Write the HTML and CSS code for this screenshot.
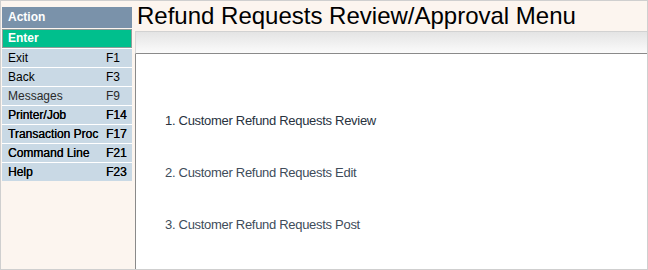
FILE: index.html
```html
<!DOCTYPE html>
<html>
<head>
<meta charset="utf-8">
<link rel="stylesheet" href="styles.css">
</head>
<body>
<div class="frame">
  <aside class="sidebar">
    <div class="side-head">Action</div>
    <div class="side-enter">Enter</div>
    <ul class="keys">
      <li class="key"><span>Exit</span><span>F1</span></li>
      <li class="key"><span>Back</span><span>F3</span></li>
      <li class="key dim"><span>Messages</span><span>F9</span></li>
      <li class="key strong"><span>Printer/Job</span><span>F14</span></li>
      <li class="key strong"><span>Transaction Proc</span><span>F17</span></li>
      <li class="key strong"><span>Command Line</span><span>F21</span></li>
      <li class="key strong"><span>Help</span><span>F23</span></li>
    </ul>
  </aside>
  <main class="main">
    <h1 class="title">Refund Requests Review/Approval Menu</h1>
    <div class="toolbar"></div>
    <div class="panel">
      <ol class="menu">
        <li class="item current">1. Customer Refund Requests Review</li>
        <li class="item">2. Customer Refund Requests Edit</li>
        <li class="item">3. Customer Refund Requests Post</li>
      </ol>
    </div>
  </main>
</div>
</body>
</html>
```
FILE: styles.css
```css
html, body {
  margin: 0;
  padding: 0;
}
body {
  width: 648px;
  height: 270px;
  overflow: hidden;
  font-family: "Liberation Sans", Arial, sans-serif;
}
.frame {
  box-sizing: border-box;
  width: 648px;
  height: 270px;
  border: 1px solid #cfcfcf;
  background: #fcf5ef;
  display: flex;
}
.sidebar {
  width: 130px;
  margin-left: 1px;
  padding-top: 6px;
  flex: none;
}
.side-head {
  height: 21px;
  line-height: 21px;
  background: #7a92aa;
  color: #fff;
  font-weight: bold;
  font-size: 12px;
  padding-left: 6px;
}
.side-enter {
  margin-top: 1px;
  height: 17px;
  line-height: 17px;
  border: 1px solid #8e9c9a;
  background: #00bf8d;
  color: #fff;
  font-weight: bold;
  font-size: 12px;
  padding-left: 5px;
}
.keys {
  list-style: none;
  margin: 0;
  padding: 0;
}
.key {
  display: grid;
  grid-template-columns: 98px auto;
  height: 18px;
  line-height: 18px;
  border-top: 1px solid #ffffff;
  background: #c9d9e5;
  color: #000;
  font-size: 12px;
  padding-left: 6px;
}
.key.dim {
  color: #2a2a2a;
}
.key.strong {
  color: #000;
  text-shadow: 0.2px 0 0 #000;
}
.main {
  flex: 1;
  display: flex;
  flex-direction: column;
  margin-left: 3px;
}
.title {
  margin: 0;
  height: 30px;
  padding-left: 2px;
  font-weight: normal;
  font-size: 24px;
  line-height: 30px;
  color: #000;
}
.toolbar {
  height: 21px;
  border-top: 1px solid #d2d2d2;
  border-bottom: 1px solid #8a8a8a;
  border-left: 1px solid #d8d8d8;
  background: linear-gradient(to bottom, #e4e4e4, #fbfbfb);
}
.panel {
  flex: 1;
  background: #fff;
  border-left: 1px solid #8a8a8a;
}
.menu {
  list-style: none;
  margin: 0;
  padding: 59px 0 0 29px;
  display: flex;
  flex-direction: column;
  gap: 36px;
}
.item {
  font-size: 13px;
  line-height: 16px;
  letter-spacing: -0.3px;
  color: #404c5a;
}
.item.current {
  color: #28323e;
}
```
